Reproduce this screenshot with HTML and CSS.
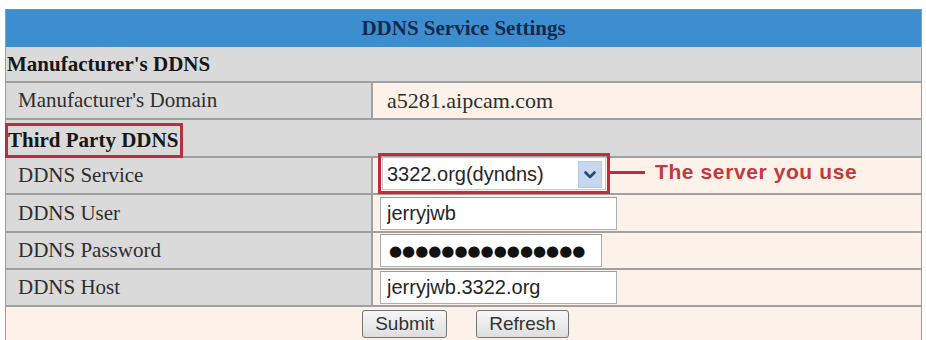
FILE: index.html
```html
<!DOCTYPE html>
<html lang="en">
<head>
<meta charset="utf-8">
<title>DDNS Service Settings</title>
<link rel="stylesheet" href="styles.css">
</head>
<body>
<div class="panel">
  <div class="title">DDNS Service Settings</div>
  <div class="section h36">Manufacturer's DDNS</div>
  <div class="row h37">
    <div class="label">Manufacturer's Domain</div>
    <div class="value"><span class="static">a5281.aipcam.com</span></div>
  </div>
  <div class="section third h38"><span class="mark">Third Party DDNS</span></div>
  <div class="row h37">
    <div class="label">DDNS Service</div>
    <div class="value">
      <div class="callout">
        <div class="selectbox">
          <select class="select"><option>3322.org(dyndns)</option></select>
          <span class="arrow"><svg width="12" height="8" viewBox="0 0 12 8"><path d="M1.5 1.5 L6 6 L10.5 1.5" fill="none" stroke="#27457f" stroke-width="2.6" stroke-linecap="round" stroke-linejoin="round"/></svg></span>
        </div>
      </div>
      <span class="connector"></span>
      <span class="note">The server you use</span>
    </div>
  </div>
  <div class="row h38">
    <div class="label">DDNS User</div>
    <div class="value"><input class="field wide" type="text" value="jerryjwb"></div>
  </div>
  <div class="row h37">
    <div class="label">DDNS Password</div>
    <div class="value"><input class="field narrow dots" type="text" value="●●●●●●●●●●●●●●●"></div>
  </div>
  <div class="row h37">
    <div class="label">DDNS Host</div>
    <div class="value"><input class="field wide" type="text" value="jerryjwb.3322.org"></div>
  </div>
  <div class="actions">
    <button class="btn" type="button">Submit</button>
    <button class="btn" type="button">Refresh</button>
  </div>
</div>
</body>
</html>
```
FILE: styles.css
```css
body {
  margin: 0;
  background: #ffffff;
  font-family: "Liberation Serif", "Times New Roman", serif;
}

.panel {
  margin: 9px 0 0 5px;
  width: 917px;
  box-sizing: border-box;
  border-left: 1px solid #9c9c9c;
  border-right: 1px solid #9c9c9c;
}

.title {
  height: 38px;
  box-sizing: border-box;
  border-top: 1px solid #6f8fae;
  background: #3d8ecf;
  color: #15294d;
  font-weight: bold;
  font-size: 21px;
  display: flex;
  align-items: center;
  justify-content: center;
}

.section {
  box-sizing: border-box;
  border-bottom: 2px solid #a0a0a0;
  background: #dadada;
  display: flex;
  align-items: center;
  font-weight: bold;
  font-size: 21px;
  color: #161616;
  padding-left: 1px;
}

.h36 { height: 36px; }
.h37 { height: 37px; }
.h38 { height: 38px; }

.third {
  align-items: flex-end;
  padding-left: 0;
}

.mark {
  display: flex;
  align-items: center;
  height: 35px;
  box-sizing: border-box;
  border: 3px solid #b8303d;
  margin: 0 0 -2px -1px;
  padding: 0 2px 0 0;
}

.row {
  display: grid;
  grid-template-columns: 367px 1fr;
  grid-template-rows: minmax(0, 1fr);
  box-sizing: border-box;
  border-bottom: 2px solid #a0a0a0;
}

.label {
  background: #dadada;
  border-right: 2px solid #a0a0a0;
  display: flex;
  align-items: center;
  padding-left: 12px;
  font-size: 21px;
  color: #2e2e2e;
  min-height: 0;
}

.value {
  background: #fcf2ea;
  display: flex;
  align-items: center;
  padding-left: 7px;
  min-height: 0;
}

.static {
  padding-left: 7px;
  font-size: 22px;
  color: #2e2e2e;
}

.callout {
  flex: none;
  margin: 0 0 4px -2px;
  border: 3px solid #b8303d;
  padding: 1px;
}

.selectbox {
  width: 224px;
  height: 33px;
  box-sizing: border-box;
  background: #ffffff;
  border: 1px solid #c8c8c8;
  display: flex;
  align-items: stretch;
}

.select {
  flex: 1;
  appearance: none;
  -webkit-appearance: none;
  border: none;
  background: transparent;
  font-family: "Liberation Sans", Arial, sans-serif;
  font-size: 20px;
  color: #262626;
  padding: 0 0 0 4px;
  margin: 0;
  outline: none;
}

.arrow {
  width: 22px;
  margin: 3px 3px 1px 0;
  background: #c9d6ef;
  border: 1px solid #b9c8e6;
  display: flex;
  align-items: center;
  justify-content: center;
}

.connector {
  flex: none;
  width: 35px;
  height: 3px;
  background: #b8303d;
  margin-bottom: 7px;
}

.note {
  margin: 0 0 7px 10px;
  font-family: "Liberation Sans", Arial, sans-serif;
  font-weight: bold;
  font-size: 21px;
  letter-spacing: 0.6px;
  color: #c03a3f;
}

.field {
  height: 33px;
  box-sizing: border-box;
  border: 1px solid #aeaeae;
  border-top-color: #9a9a9a;
  background: #ffffff;
  font-family: "Liberation Sans", Arial, sans-serif;
  font-size: 20px;
  color: #262626;
  padding: 0 0 0 6px;
  margin: 0;
  outline: none;
}

.wide { width: 237px; }
.narrow { width: 222px; }

.dots {
  font-family: "DejaVu Sans", sans-serif;
  font-size: 15px;
  letter-spacing: 0;
  color: #111111;
  padding-left: 8px;
}

.actions {
  height: 40px;
  background: #fcf2ea;
  display: flex;
  justify-content: center;
  align-items: flex-start;
  gap: 29px;
  padding: 3px 0 0 4px;
  box-sizing: border-box;
}

.btn {
  height: 28px;
  padding: 0 12px;
  border: 1px solid #757575;
  border-radius: 3px;
  background: linear-gradient(#f7f7f7, #dedede);
  font-family: "Liberation Sans", Arial, sans-serif;
  font-size: 19px;
  color: #333333;
  margin: 0;
}
```
